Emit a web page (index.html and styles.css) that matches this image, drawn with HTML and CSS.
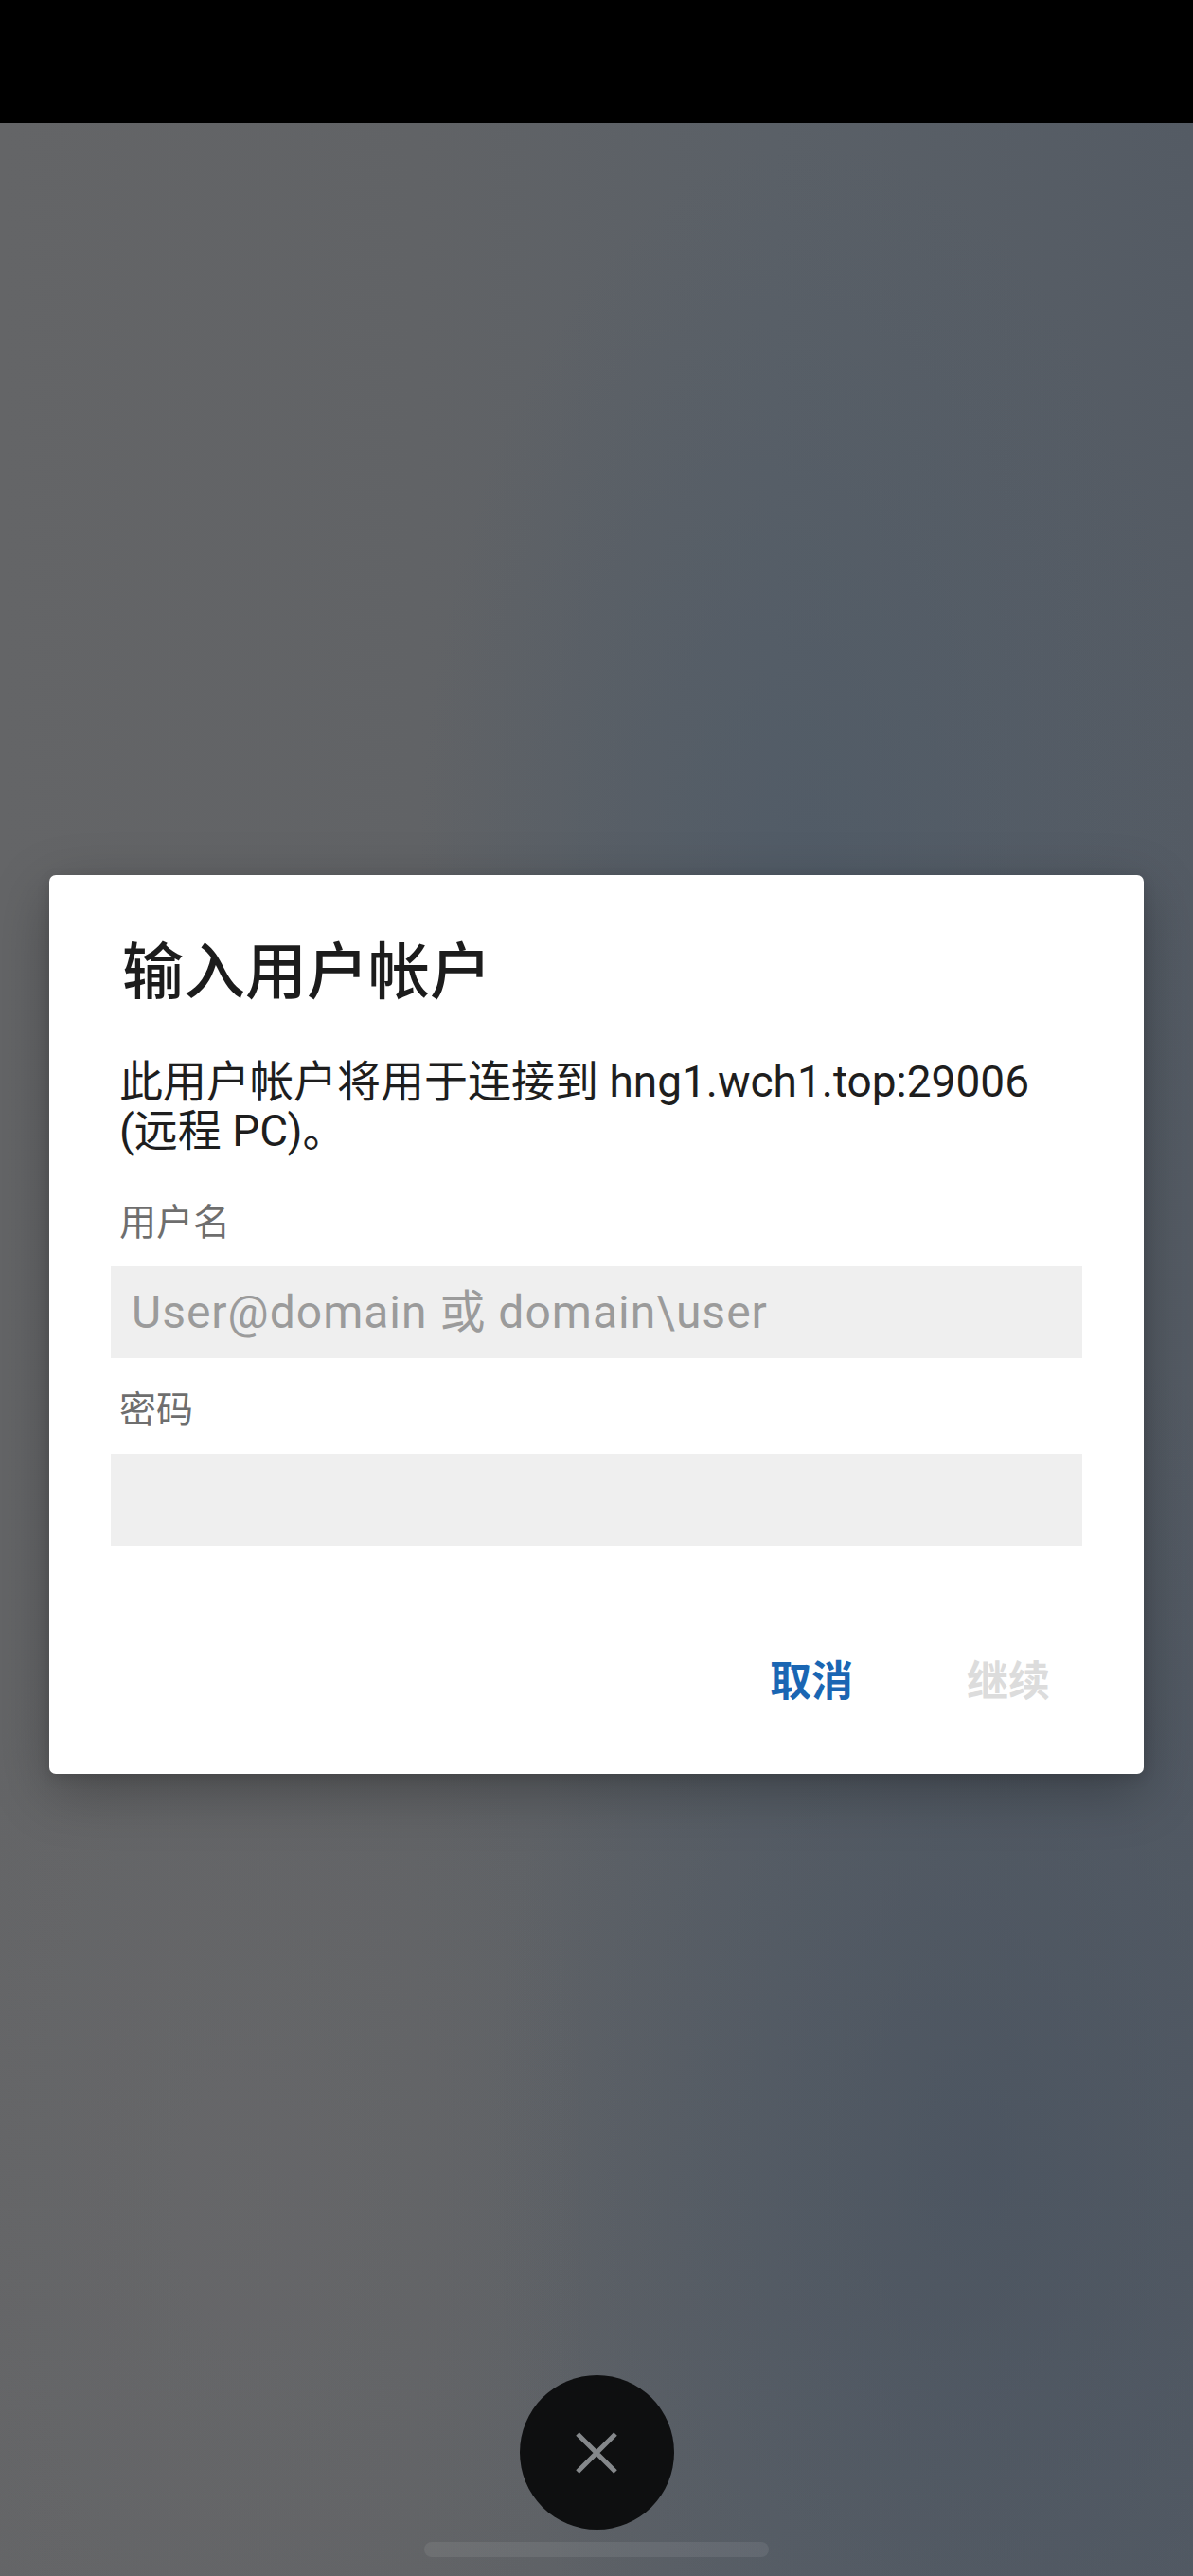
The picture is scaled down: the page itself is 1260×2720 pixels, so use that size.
FILE: index.html
```html
<!DOCTYPE html>
<html lang="zh-CN">
	<head>
		<meta charset="utf-8">
		<link rel="stylesheet" href="styles.css">
		<title>输入用户帐户</title>
	</head>
	<body>
		<div class="statusbar"></div>
		<div class="screen">
			<div class="dialog">
				<div class="title">输入用户帐户</div>
				<div class="message">此用户帐户将用于连接到 hng1.wch1.top:29006 <span class="nowrap">(远程 PC)。</span></div>
				<div class="label">用户名</div>
				<input class="field" type="text" name="username" placeholder="User@domain 或 domain\user">
				<div class="label second">密码</div>
				<input class="field" type="password" name="password">
				<div class="actions">
					<button class="action cancel">取消</button>
					<button class="action proceed" disabled>继续</button>
				</div>
			</div>
			<div class="close">
				<svg width="46" height="46" viewBox="0 0 46 46">
					<path d="M3 3 L43 43 M43 3 L3 43" stroke="#85888b" stroke-width="5" stroke-linecap="butt" fill="none"/>
				</svg>
			</div>
			<div class="homebar"></div>
		</div>
	</body>
</html>
```

FILE: styles.css
```css
body { margin:0; font-family:Roboto, "Noto Sans CJK SC", sans-serif; }
.statusbar { height:130px; background:#000; }

.screen {
	height:2590px;
	display:flex;
	flex-direction:column;
	align-items:center;
	background:
		radial-gradient(ellipse 420px 800px at 860px 820px, rgba(78,90,103,0.75), rgba(78,90,103,0)),
		radial-gradient(ellipse 520px 900px at 1040px 2150px, rgba(72,82,95,0.7), rgba(72,82,95,0)),
		radial-gradient(ellipse 380px 700px at 250px 2200px, rgba(104,104,106,0.6), rgba(104,104,106,0)),
		linear-gradient(to right, #646567 0%, #616366 35%, #5a6067 65%, #545b64 100%);
}

.dialog {
	box-sizing:border-box;
	width:1156px;
	margin-top:794px;
	padding:65px 65px 53px;
	background:#fff;
	border-radius:7px;
	box-shadow:0 18px 60px rgba(0,0,0,0.28), 0 4px 14px rgba(0,0,0,0.12);
}

.title { padding:0 9px 0 12px; font-size:65px; line-height:76px; font-weight:500; color:#1c1c1c; }
.message { margin-top:51px; padding:0 9px; font-size:46px; line-height:52px; color:#1e1e1e; }
.nowrap { white-space:nowrap; }

.label { margin-top:48px; padding:0 9px; font-size:39px; line-height:46px; color:#6e6e6e; }
.label.second { margin-top:32px; }

.field {
	display:block;
	box-sizing:border-box;
	width:100%;
	height:97px;
	margin-top:23px;
	padding:0 22px;
	border:none;
	outline:none;
	background:#efefef;
	font-family:Roboto, "Noto Sans CJK SC", sans-serif;
	font-size:48px;
	letter-spacing:1px;
	color:#222;
}
.field::placeholder { color:#9b9b9b; }

.actions { display:flex; justify-content:flex-end; gap:52px; margin-top:92px; }
.action {
	padding:0 34px;
	border:none;
	background:none;
	font-family:"Noto Sans CJK SC", sans-serif;
	font-size:44px;
	line-height:96px;
	font-weight:700;
}
.cancel { color:#1a66b3; }
.proceed { color:#dcdcdc; }

.close {
	width:163px;
	height:163px;
	margin-top:635px;
	border-radius:50%;
	background:#0e0f10;
	display:flex;
	align-items:center;
	justify-content:center;
}

.homebar {
	width:364px;
	height:16px;
	margin-top:13px;
	border-radius:8px;
	background:rgba(255,255,255,0.08);
}
```
